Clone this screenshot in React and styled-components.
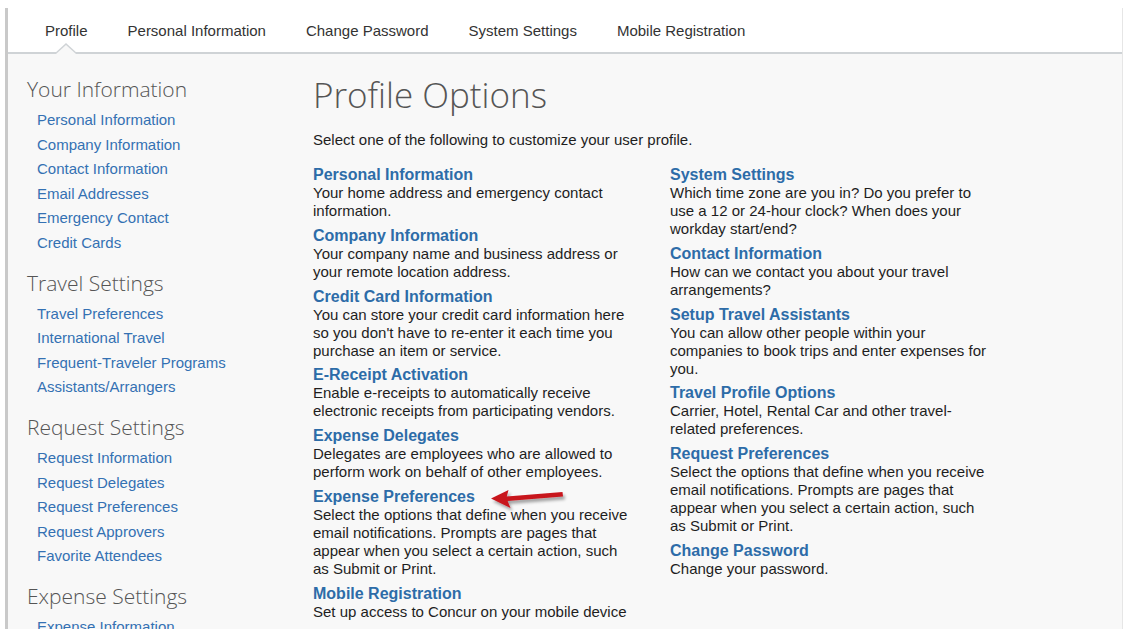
import React from "react";
import styled, { createGlobalStyle } from "styled-components";

const GlobalStyle = createGlobalStyle`
  html, body {
    margin: 0;
    padding: 0;
    background: #ffffff;
  }
  body {
    font-family: "Liberation Sans", Arial, sans-serif;
    overflow: hidden;
  }
  * { box-sizing: border-box; }
`;

const Frame = styled.div`
  margin: 8px 0 0 5px;
  border-left: 3px solid #c9c9c9;
  border-right: 1px solid #e6e6e6;
  min-height: calc(100vh - 8px);
  background: #f8f8f8;
  display: flex;
  flex-direction: column;
`;

const TabBar = styled.nav`
  height: 46px;
  background: #ffffff;
  border-bottom: 2px solid #cfd3d6;
  display: flex;
  align-items: stretch;
  padding-left: 17px;
`;

const Tab = styled.a`
  position: relative;
  display: flex;
  align-items: center;
  padding: 1px 20px 0;
  font-size: 15px;
  color: #333333;
  text-decoration: none;
  cursor: pointer;

  ${(p) =>
    p.$active &&
    `
    &::before, &::after {
      content: "";
      position: absolute;
      left: 50%;
      width: 0;
      height: 0;
      transform: translateX(-50%);
    }
    &::before {
      bottom: -2px;
      border-left: 12px solid transparent;
      border-right: 12px solid transparent;
      border-bottom: 11px solid #cfd3d6;
    }
    &::after {
      bottom: -2px;
      border-left: 10px solid transparent;
      border-right: 10px solid transparent;
      border-bottom: 9px solid #f8f8f8;
    }
  `}
`;

const Body = styled.div`
  display: flex;
  flex: 1;
`;

const Sidebar = styled.aside`
  width: 305px;
  flex: none;
  padding: 20px 0 0 19px;
`;

const Section = styled.section`
  & + & {
    margin-top: 12px;
  }
`;

const SectionTitle = styled.h2`
  margin: 0 0 4px;
  font-family: "Open Sans", "Liberation Sans", sans-serif;
  font-weight: 300;
  font-size: 21px;
  line-height: 30px;
  color: #555555;
`;

const SideLink = styled.a`
  display: block;
  padding-left: 10px;
  font-size: 15px;
  line-height: 24.6px;
  color: #3471b3;
  text-decoration: none;
  white-space: nowrap;
  cursor: pointer;
`;

const Main = styled.main`
  flex: 1;
  padding-top: 19px;
`;

const PageTitle = styled.h1`
  margin: 0;
  font-family: "Open Sans", "Liberation Sans", sans-serif;
  font-weight: 300;
  font-size: 35px;
  line-height: 44px;
  color: #555555;
`;

const Intro = styled.p`
  margin: 14px 0 0;
  font-size: 15px;
  line-height: 18px;
  color: #1e1e1e;
`;

const Columns = styled.div`
  margin-top: 17px;
  display: grid;
  grid-template-columns: 320px 320px;
  column-gap: 37px;
  align-items: start;
`;

const Column = styled.div`
  display: flex;
  flex-direction: column;
  gap: 6.8px;
`;

const Option = styled.div`
  position: relative;
`;

const OptionTitle = styled.a`
  display: block;
  font-size: 16px;
  font-weight: bold;
  line-height: 18px;
  color: #2d6ca8;
  text-decoration: none;
  cursor: pointer;
`;

const OptionText = styled.div`
  font-size: 15px;
  line-height: 18px;
  color: #1e1e1e;
`;

const Pointer = styled.svg`
  position: absolute;
  left: 175px;
  top: -1px;
  overflow: visible;
  pointer-events: none;
`;

const sections = [
  {
    title: "Your Information",
    links: [
      "Personal Information",
      "Company Information",
      "Contact Information",
      "Email Addresses",
      "Emergency Contact",
      "Credit Cards",
    ],
  },
  {
    title: "Travel Settings",
    links: [
      "Travel Preferences",
      "International Travel",
      "Frequent-Traveler Programs",
      "Assistants/Arrangers",
    ],
  },
  {
    title: "Request Settings",
    links: [
      "Request Information",
      "Request Delegates",
      "Request Preferences",
      "Request Approvers",
      "Favorite Attendees",
    ],
  },
  {
    title: "Expense Settings",
    links: ["Expense Information"],
  },
];

const leftOptions = [
  {
    title: "Personal Information",
    text: "Your home address and emergency contact information.",
  },
  {
    title: "Company Information",
    text: "Your company name and business address or your remote location address.",
  },
  {
    title: "Credit Card Information",
    text: "You can store your credit card information here so you don't have to re-enter it each time you purchase an item or service.",
  },
  {
    title: "E-Receipt Activation",
    text: "Enable e-receipts to automatically receive electronic receipts from participating vendors.",
  },
  {
    title: "Expense Delegates",
    text: "Delegates are employees who are allowed to perform work on behalf of other employees.",
  },
  {
    title: "Expense Preferences",
    text: "Select the options that define when you receive email notifications. Prompts are pages that appear when you select a certain action, such as Submit or Print.",
    pointer: true,
  },
  {
    title: "Mobile Registration",
    text: "Set up access to Concur on your mobile device",
  },
];

const rightOptions = [
  {
    title: "System Settings",
    text: "Which time zone are you in? Do you prefer to use a 12 or 24-hour clock? When does your workday start/end?",
  },
  {
    title: "Contact Information",
    text: "How can we contact you about your travel arrangements?",
  },
  {
    title: "Setup Travel Assistants",
    text: "You can allow other people within your companies to book trips and enter expenses for you.",
  },
  {
    title: "Travel Profile Options",
    text: "Carrier, Hotel, Rental Car and other travel-related preferences.",
  },
  {
    title: "Request Preferences",
    text: "Select the options that define when you receive email notifications. Prompts are pages that appear when you select a certain action, such as Submit or Print.",
  },
  {
    title: "Change Password",
    text: "Change your password.",
  },
];

const tabs = [
  "Profile",
  "Personal Information",
  "Change Password",
  "System Settings",
  "Mobile Registration",
];

function RedArrow() {
  return (
    <Pointer width="80" height="26" viewBox="0 0 80 26">
      <defs>
        <filter id="arrowShadow" x="-20%" y="-40%" width="150%" height="200%">
          <feDropShadow dx="2" dy="3" stdDeviation="1.6" floodColor="#000" floodOpacity="0.35" />
        </filter>
      </defs>
      <path
        d="M3 11.5 L20.5 3 L18.8 9.4 L74.5 5 L75 9.6 L19.6 14 L22.5 21 Z"
        fill="#c8141c"
        filter="url(#arrowShadow)"
      />
    </Pointer>
  );
}

function OptionList({ items }) {
  return (
    <Column>
      {items.map((item) => (
        <Option key={item.title}>
          <OptionTitle>{item.title}</OptionTitle>
          <OptionText>{item.text}</OptionText>
          {item.pointer && <RedArrow />}
        </Option>
      ))}
    </Column>
  );
}

export default function App() {
  return (
    <>
      <GlobalStyle />
      <Frame>
        <TabBar>
          {tabs.map((t, i) => (
            <Tab key={t} $active={i === 0}>
              {t}
            </Tab>
          ))}
        </TabBar>
        <Body>
          <Sidebar>
            {sections.map((s) => (
              <Section key={s.title}>
                <SectionTitle>{s.title}</SectionTitle>
                {s.links.map((l) => (
                  <SideLink key={l}>{l}</SideLink>
                ))}
              </Section>
            ))}
          </Sidebar>
          <Main>
            <PageTitle>Profile Options</PageTitle>
            <Intro>Select one of the following to customize your user profile.</Intro>
            <Columns>
              <OptionList items={leftOptions} />
              <OptionList items={rightOptions} />
            </Columns>
          </Main>
        </Body>
      </Frame>
    </>
  );
}
